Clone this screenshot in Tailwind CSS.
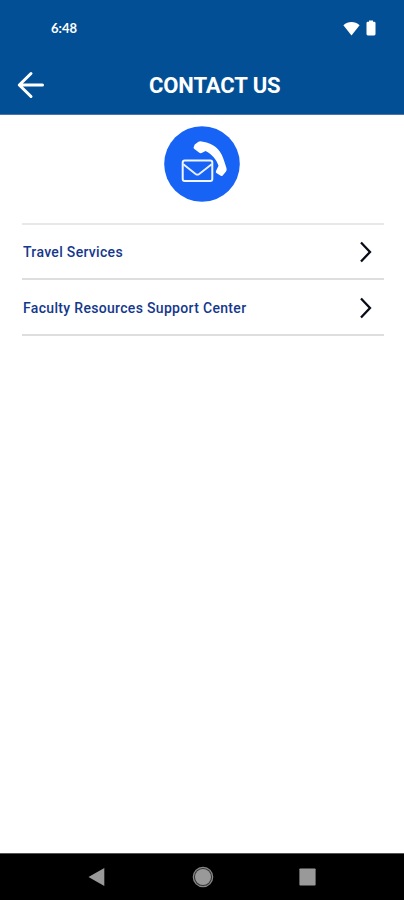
<!DOCTYPE html>
<html lang="en">
<head>
<meta charset="utf-8">
<meta name="viewport" content="width=device-width, initial-scale=1">
<title>Contact Us</title>
<script src="https://cdn.jsdelivr.net/npm/@tailwindcss/browser@4"></script>
</head>
<body class="bg-white font-['Roboto',sans-serif]">
<div class="flex h-[900px] w-[404px] flex-col overflow-hidden bg-white">
  <header class="h-[115px] shrink-0 border-b border-[#4b73b0] bg-[#034f95] text-white">
    <div class="flex h-[56px] items-center justify-between pr-[28px] pl-[51px]">
      <span class="font-['Lato','Roboto',sans-serif] text-[13px] leading-none font-bold">6:48</span>
      <div class="flex items-center gap-[6px]">
        <svg class="h-[15px] w-[17px]" viewBox="0 0 17 15" fill="currentColor"><path d="M.4 4.2C5-.2 12-.2 16.600 4.200L8.500 14.500Z"/></svg>
        <svg class="h-[16px] w-[10px]" viewBox="0 0 10 16" fill="currentColor"><path d="M3 .5h4v1.300h1.200q1.300 0 1.300 1.300v11q0 1.300-1.300 1.300H1.800Q.5 15.400.5 14.100v-11q0-1.300 1.300-1.300H3z"/></svg>
      </div>
    </div>
    <div class="flex h-[58px] items-center pl-[17px]">
      <svg class="h-[28px] w-[28px]" viewBox="0 0 28 28" fill="none" stroke="currentColor" stroke-width="3" stroke-linecap="round" stroke-linejoin="round"><path d="M14 2.500L2.300 14 14 25.500M2.300 14H25.500"/></svg>
      <h1 class="ml-[104px] pt-[2px] text-[22px] leading-none font-bold tracking-[-0.1px] whitespace-nowrap">CONTACT US</h1>
    </div>
  </header>
  <main class="flex grow flex-col pt-[11px] pr-[20px] pl-[22px]">
    <svg class="ml-[142px] h-[76px] w-[76px]" viewBox="164 126 76 76">
      <circle cx="202" cy="164" r="37.800" fill="#1763f5"/>
      <rect x="182.700" y="160.600" width="29.600" height="20.400" rx="2" fill="none" stroke="#f0f5ff" stroke-width="2"/>
      <path d="M183.300 164.200L195.600 174Q197.400 175.300 199.200 174L211.700 164.200" fill="none" stroke="#e8f0ff" stroke-width="1.900"/>
      <path d="M193.600 147.400L194.700 144.600 198.500 141.700Q200.100 140.800 201.700 141.600L206.700 142.500C216 145.300 221.500 151.300 224.500 162L226.500 168.300Q227 170 226 171.400L222.700 175.400Q221.600 176.500 220.300 175.500L216.400 173.100Q215.400 172.300 216 171L218.500 165.700C216.500 159.700 212 154.300 205.500 151L201.600 153Q200.200 153.500 199 152.500L194.400 149.100Q193.400 148.300 193.600 147.400Z" fill="#fff"/>
    </svg>
    <nav class="mt-[21px] flex flex-col border-t-2 border-[#e8e8e8] text-[14px] font-medium text-[#15388c]">
      <a class="flex h-[55px] items-center justify-between border-b-2 border-[#dedede] pr-[12px] pl-[1px]">
        <span class="pt-[2px] tracking-[0.320px]">Travel Services</span>
        <svg class="h-[22px] w-[14px]" viewBox="0 0 14 22" fill="none" stroke="#090b18" stroke-width="2.300"><path d="M3 1.500L12 11 3 20.500"/></svg>
      </a>
      <a class="flex h-[56px] items-center justify-between border-b-2 border-[#dedede] pt-[1px] pr-[12px] pl-[1px]">
        <span class="pt-[2px] tracking-[0.320px]">Faculty Resources Support Center</span>
        <svg class="h-[22px] w-[14px]" viewBox="0 0 14 22" fill="none" stroke="#090b18" stroke-width="2.300"><path d="M3 1.500L12 11 3 20.500"/></svg>
      </a>
    </nav>
  </main>
  <footer class="flex h-[47px] shrink-0 items-center border-t border-[#555] bg-black pl-[88px] text-[#999]">
    <svg class="h-[20px] w-[17px]" viewBox="0 0 17 20" fill="currentColor"><path d="M.5 10L16.300 1v18z"/></svg>
    <svg class="ml-[87px] h-[22px] w-[22px]" viewBox="0 0 22 22"><circle cx="11" cy="11" r="9.700" fill="#333" stroke="#888" stroke-width="1.200"/><circle cx="11" cy="11" r="8" fill="currentColor"/></svg>
    <svg class="ml-[85px] h-[18px] w-[17px]" viewBox="0 0 17 18"><rect x=".4" y=".5" width="16.200" height="17" rx=".8" fill="currentColor"/></svg>
  </footer>
</div>
</body>
</html>
